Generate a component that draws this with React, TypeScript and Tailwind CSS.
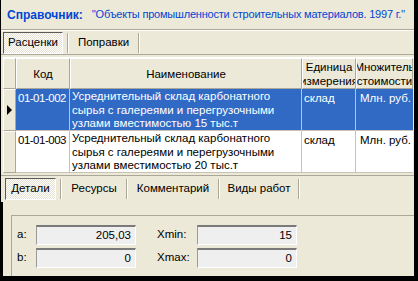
import React from "react";

const FONT = { fontFamily: '"Liberation Sans", Arial, sans-serif' };

function Sep() {
  return <div className="mx-[4px] h-[20px] w-[2px] border-l border-[#aca899] border-r border-r-white" />;
}

function Tab({ label, active, w }: { label: string; active?: boolean; w: string }) {
  if (active) {
    return (
      <div
        className={`flex h-[22px] ${w} items-center justify-center border border-t-[#5a5a5a] border-l-[#5a5a5a] border-b-white border-r-white bg-[repeating-conic-gradient(#ffffff_0_25%,#e4e1d0_0_50%)] bg-[length:2px_2px] text-[11.5px] text-black`}
      >
        {label}
      </div>
    );
  }
  return <div className={`flex h-[22px] ${w} items-center justify-center text-[11.5px] text-black`}>{label}</div>;
}

const rows = [
  {
    code: "01-01-002",
    name: ["Усреднительный склад карбонатного", "сырья с галереями и перегрузочными", "узлами вместимостью 15 тыс.т"],
    unit: "склад",
    mult: "Млн. руб.",
    sel: true,
  },
  {
    code: "01-01-003",
    name: ["Усреднительный склад карбонатного", "сырья с галереями и перегрузочными", "узлами вместимостью 20 тыс.т"],
    unit: "склад",
    mult: "Млн. руб.",
    sel: false,
  },
];

function Field({ label, value, lw }: { label: string; value: string; lw: string }) {
  return (
    <div className="flex items-center">
      <span className={`${lw} text-[11.5px]`}>{label}</span>
      <div className="flex h-[20px] w-[100px] items-center justify-end border border-t-2 border-t-[#7a7a7a] border-l-[#9a9a9a] border-b-white border-r-white bg-[#efefef] pr-[4px] text-[11.5px]">
        {value}
      </div>
    </div>
  );
}

export default function App() {
  return (
    <div
      className="flex h-[281px] w-[418px] flex-col overflow-hidden border-l border-l-black border-r-4 border-r-black border-b-[5px] border-b-black bg-[#ece9d8] text-black"
      style={FONT}
    >
      {/* Title */}
      <div className="flex h-[30px] shrink-0 items-center overflow-hidden whitespace-nowrap border-b border-b-[#aca899] pl-[6px] text-[#0046d5]">
        <span className="text-[12px] font-bold">Справочник:</span>
        <span className="ml-[9px] text-[11px] tracking-[-0.2px]">
          ''Объекты промышленности строительных материалов. 1997 г.''
        </span>
      </div>

      {/* Top tabs */}
      <div className="flex h-[25px] shrink-0 items-center border-t border-t-white border-b border-b-[#aca899] pl-[2px]">
        <Tab label="Расценки" active w="w-[60px]" />
        <Sep />
        <Tab label="Поправки" w="w-[61px]" />
        <Sep />
      </div>

      {/* Grid */}
      <div className="ml-[2px] mt-[2px] shrink-0 border-t border-white">
        <div className="grid grid-cols-[13px_54px_232px_54px_57px] text-[11.5px]">
          {["", "Код", "Наименование", "Единица\nизмерения", "Множитель\nстоимости"].map((h, i) => (
            <div
              key={i}
              className="flex h-[31px] flex-col items-center justify-center overflow-hidden whitespace-nowrap border-t border-l border-t-white border-l-white border-r border-b border-r-[#aca899] border-b-[#aca899] leading-[14px]"
            >
              {h.split("\n").map((l) => (
                <span key={l}>{l}</span>
              ))}
            </div>
          ))}
          {rows.map((r) => (
            <React.Fragment key={r.code}>
              <div className="flex h-[42px] items-center border-t border-l border-t-white border-l-white border-r border-b border-r-[#aca899] border-b-[#aca899] pl-[3px]">
                {r.sel && <div className="h-0 w-0 border-y-[5px] border-l-[5px] border-y-transparent border-l-black" />}
              </div>
              <div
                className={`h-[42px] whitespace-nowrap border-r border-b border-[#c7c4b6] pl-[2px] pt-[1px] tracking-[-0.5px] ${r.sel ? "bg-[#316ac5] text-white" : "bg-white"}`}
              >
                {r.code}
              </div>
              <div
                className={`h-[42px] overflow-hidden whitespace-nowrap border-r border-b border-[#c7c4b6] pl-[2px] pt-[1px] leading-[13.5px] ${r.sel ? "bg-[#316ac5] text-white" : "bg-white"}`}
              >
                {r.name.map((l) => (
                  <div key={l}>{l}</div>
                ))}
              </div>
              <div className={`h-[42px] border-r border-b border-[#c7c4b6] pl-[2px] pt-[1px] ${r.sel ? "bg-[#316ac5] text-white" : "bg-white"}`}>
                {r.unit}
              </div>
              <div
                className={`h-[42px] whitespace-nowrap border-b border-[#c7c4b6] pr-[2px] pt-[1px] text-right ${r.sel ? "bg-[#316ac5] text-white" : "bg-white"}`}
              >
                {r.mult}
              </div>
            </React.Fragment>
          ))}
        </div>
      </div>

      {/* Bottom tabs */}
      <div className="mt-[2px] flex h-[27px] shrink-0 items-center border-t border-t-[#aca899] pl-[4px]">
        <Tab label="Детали" active w="w-[51px]" />
        <Sep />
        <Tab label="Ресурсы" w="w-[56px]" />
        <Sep />
        <Tab label="Комментарий" w="w-[82px]" />
        <Sep />
        <Tab label="Виды работ" w="w-[70px]" />
        <Sep />
      </div>

      {/* Details panel */}
      <div className="flex flex-1 flex-col border-l-2 border-black">
        <div className="ml-[8px] mt-[13px] flex flex-1 flex-col gap-[3px] border-t border-l border-t-[#aca899] border-l-[#aca899] pl-[5px] pt-[9px]">
          <div className="flex gap-[21px]">
            <Field label="a:" value="205,03" lw="w-[19px]" />
            <Field label="Xmin:" value="15" lw="w-[40px]" />
          </div>
          <div className="flex gap-[21px]">
            <Field label="b:" value="0" lw="w-[19px]" />
            <Field label="Xmax:" value="0" lw="w-[40px]" />
          </div>
        </div>
      </div>
    </div>
  );
}
